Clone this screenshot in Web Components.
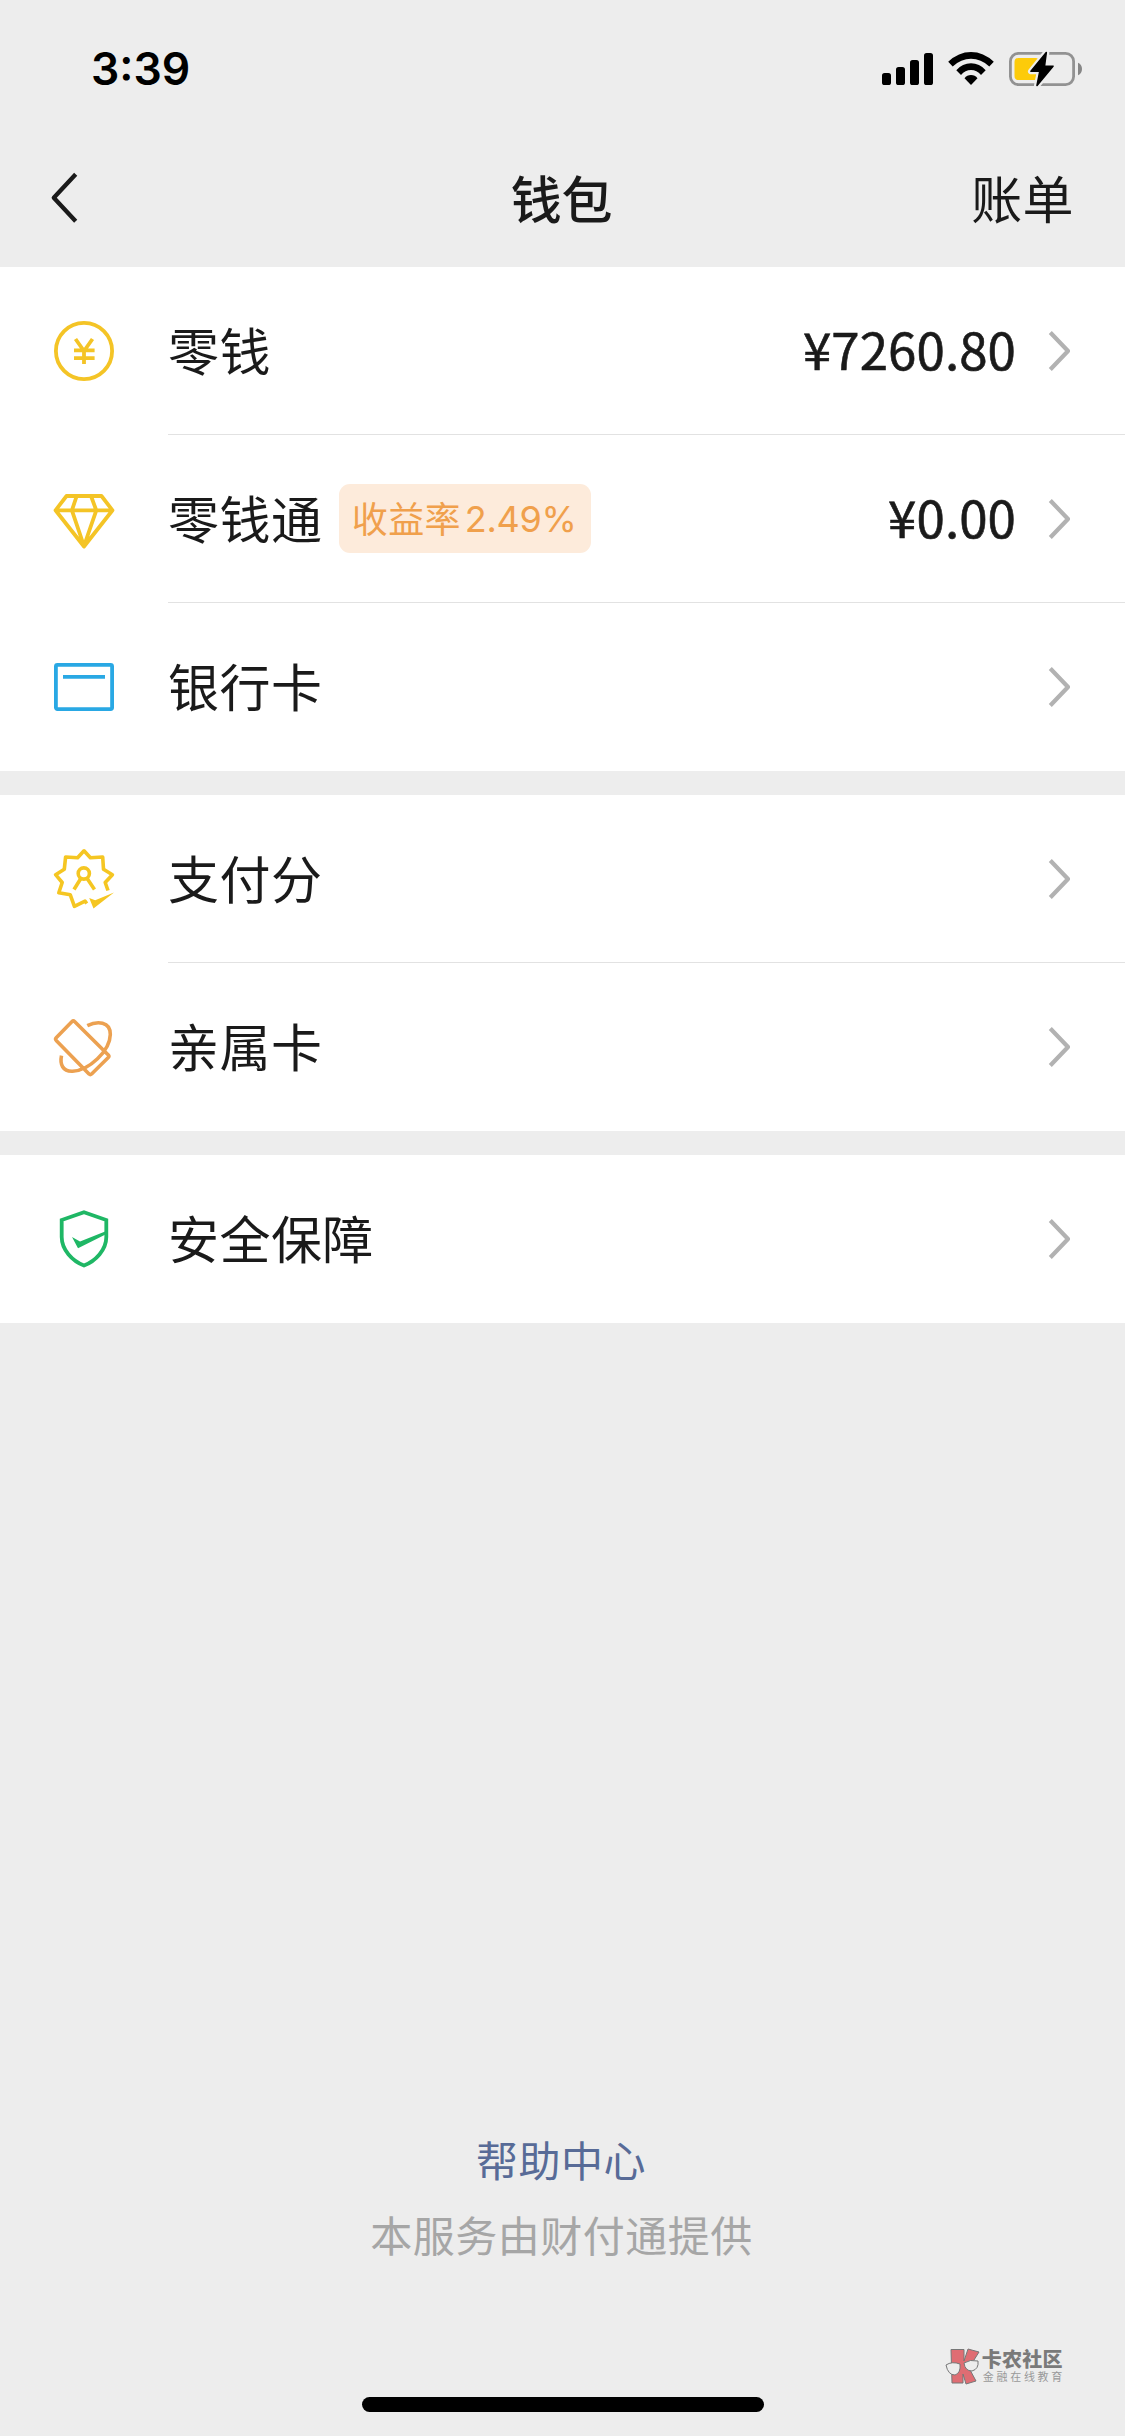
<!DOCTYPE html>
<html lang="zh-CN">
<head>
<meta charset="utf-8">
<title>钱包</title>
<style>
html,body{margin:0;padding:0;background:#ededed}
body{width:1125px;height:2436px;overflow:hidden;font-family:"Noto Sans CJK SC",sans-serif;color:#1a1a1a}
</style>
</head>
<body>
<wallet-page></wallet-page>
<script>
const define = (name, html) => customElements.define(name, class extends HTMLElement {
  constructor() {
    super();
    const t = document.createElement('template');
    t.innerHTML = html;
    this.attachShadow({ mode: 'open' }).appendChild(t.content.cloneNode(true));
  }
});

define('status-bar', `
<style>
:host{display:flex;height:132px;box-sizing:border-box;padding:6px 42px 0 91px;align-items:center;justify-content:space-between;color:#000}
.time{font:600 44.500px/54px Inter,sans-serif;letter-spacing:0}
.icons{display:flex;align-items:center}
svg{display:block}
</style>
<span class="time">3:39</span>
<div class="icons">
<svg width="203" height="38" viewBox="880 50 203 38">
  <rect x="882" y="73" width="9" height="12" rx="2.6"/><rect x="896" y="67" width="9" height="18" rx="2.6"/>
  <rect x="910" y="60" width="9" height="25" rx="2.6"/><rect x="924" y="53" width="9" height="32" rx="2.6"/>
  <path d="M948.2 61.8Q958.500 52 971 52T993.800 61.800L989.300 66.500Q981 58.800 971 58.800T952.700 66.500Z"/>
  <path d="M956.300 70.200Q962.500 63.300 971 63.300T985.700 70.200L981 75Q976.800 70 971 70T961 75Z"/>
  <path d="M964.500 78.300Q967 75 971 75T977.500 78.300L971 85Z"/>
  <rect x="1010.400" y="53.400" width="63.200" height="31.200" rx="8" fill="none" stroke="#929292" stroke-width="2.8"/>
  <rect x="1014.500" y="58" width="25" height="22" rx="4" fill="#fdcb0a"/>
  <path d="M1078 62.700Q1082 64.500 1082 69T1078 75.300Z" fill="#868686"/>
  <path d="M1046.300 52.500L1031 71.300H1039.800L1037 85.500L1053 66.200H1044.500Z" fill="#000" stroke="#ededed" stroke-width="6" stroke-linejoin="round"/>
  <path d="M1046.300 52.500L1031 71.300H1039.800L1037 85.500L1053 66.200H1044.500Z" stroke="#000" stroke-width="1.600" stroke-linejoin="round"/>
</svg></div>`);

define('nav-bar', `
<style>
:host{display:grid;grid-template-columns:1fr auto 1fr;align-items:center;height:135px;box-sizing:border-box;padding:0 51px 0 49px;font-size:51px;line-height:60px;letter-spacing:.4px}
svg{display:block;margin:0 0 3px 1px}
.t{font-weight:500;padding-bottom:5px;letter-spacing:-.2px}
.a{justify-self:end;padding-bottom:5px}
</style>
<svg width="30" height="54" viewBox="0 0 30 54"><path d="M25.700 3.200L3.800 26.700L25.700 50.200" fill="none" stroke="#1a1a1a" stroke-width="4.300" stroke-linejoin="round"/></svg>
<span class="t"><slot></slot></span><span class="a"><slot name="action"></slot></span>`);

define('wallet-group', `
<style>:host{display:flex;flex-direction:column;background:#fff;margin-bottom:24px}</style><slot></slot>`);

define('rate-badge', `
<style>
:host{display:flex;align-items:center;box-sizing:border-box;width:252px;height:69px;border-radius:11px;background:#fdebdb;color:#f0a04c;padding:0 0 0 13px;margin-left:16.500px}
.c{font-size:36px;line-height:42px;letter-spacing:.3px;padding-bottom:3px}
.n{font:400 36px/42px Inter,sans-serif;letter-spacing:-.3px;margin-left:4px}
</style>
<span class="c"><slot></slot></span><span class="n"><slot name="rate"></slot></span>`);

define('wallet-row', `
<style>
:host{display:flex;height:168px;padding-left:54px}
.icon{display:flex;align-items:center;width:114px;flex:none}
.body{display:flex;flex:1;align-items:center;box-sizing:border-box;padding-right:55px;border-bottom:1px solid #e2e2e2}
:host([last]) .body{border-bottom-color:transparent}
.label{font-size:51px;line-height:60px;letter-spacing:.45px;padding-bottom:4px}
.value{margin-left:auto;font-size:51px;line-height:60px;letter-spacing:.1px;-webkit-text-stroke:.6px #1a1a1a;padding-bottom:6px}
svg{display:block;margin-left:31px}
::slotted(wallet-icon){display:block}
</style>
<div class="icon"><slot name="icon"></slot></div>
<div class="body"><span class="label"><slot></slot></span><slot name="badge"></slot>
<span class="value"><slot name="value"></slot></span>
<svg width="23" height="42" viewBox="0 0 23 42"><path d="M3.300 2.500L21 21L3.300 39.500" fill="none" stroke="#b2b2b2" stroke-width="4.200" stroke-linejoin="round"/></svg></div>`);

const ICONS = {
  coin: ['#f4c426', '<circle cx="30" cy="30" r="28.100"/><path d="M21.500 18L30 30L38.500 18M30 29V43M20 29.400H40.600M20 37.200H40.600"/>'],
  gem: ['#f4c426', '<path d="M12.500 7H47.500L58.500 21.300L30 57.500L1.500 21.300ZM1.500 21.300H58.500M22.700 7L17.900 21.300L30 57L42.300 21.300L37 7"/>'],
  card: ['#29a8e4', '<rect x="1.900" y="7.900" width="56.200" height="44.200" rx="1.500"/><path d="M9 19.800H51"/>'],
  score: ['#f5c622', '<g stroke-width="3.600"><path d="M54 41.500L51.200 33.500L58.400 25.700L49.500 20.300L48.700 8L36.400 8.800L30 1.800L23.600 8.800L11.600 8L10.300 20.300L1.600 25.700L8.200 33.500L4.800 43.700L16.300 45.800L20.400 57.300L31 52.200L32.800 54.500"/><circle cx="29.800" cy="24.500" r="5.600"/><path d="M26.500 30L20 40.500M33.500 30L40.500 40.500"/></g><path d="M35.200 49L41.200 51.300L60 43.500L39.500 59.400Z" fill="#f5c622" stroke="none"/>'],
  family: ['#eca151', '<path stroke-width="3.600" d="M17.800 4.700L2.200 20.800Q1 22 2.200 23.400L35 57Q36.300 58.200 37.600 57L54.300 40.500Q55.500 39.300 54.300 38L20.800 4.700Q19.300 3.300 17.800 4.700ZM33.300 8.600C43 3.800 56.500 4 56.300 17.500C56 34 35 53.500 18.500 54.300C8.500 54.700 5.800 47 7.500 38.700"/>'],
  shield: ['#1fb765', '<path d="M30 3.300L52.300 11V28C52.300 41 41.500 52 30 56.500C18.500 52 7.700 41 7.700 28V11Z" stroke-linejoin="miter"/><path d="M18 28L26 32.500L53 21.700V24.800L24 39.200Z" fill="#1fb765" stroke="none"/>']
};
customElements.define('wallet-icon', class extends HTMLElement {
  connectedCallback() {
    const [color, shape] = ICONS[this.getAttribute('name')];
    this.attachShadow({ mode: 'open' }).innerHTML =
      `<style>:host{display:block}svg{display:block;overflow:visible}</style>
       <svg width="60" height="60" viewBox="0 0 60 60" fill="none" stroke="${color}" stroke-width="3.800" stroke-linejoin="round">${shape}</svg>`;
  }
});

define('page-footer', `
<style>
:host{display:flex;flex-direction:column;align-items:center;margin-top:auto;padding-right:2px;font-size:42px;line-height:60px;letter-spacing:.5px}
.help{color:#586b97;padding-right:1px}
.by{color:#a6a6a6;margin-top:15px}
</style>
<span class="help"><slot name="help"></slot></span><span class="by"><slot></slot></span>`);

define('brand-mark', `
<style>
:host{display:flex;align-items:center;align-self:flex-end;gap:2px;height:38px;margin:83px 60px 0 0;color:#7a7a7a;font-family:"Liberation Sans","Noto Sans CJK SC",sans-serif}
svg{display:block}
.txt{display:flex;flex-direction:column}
.a{font-size:20px;font-weight:900;line-height:22px;letter-spacing:.2px}
.b{font-size:11px;line-height:13px;letter-spacing:2.700px;color:#999;padding-left:1px}
</style>
<svg width="35" height="37" viewBox="0 0 35 37"><g fill="#df6d73" stroke="#777" stroke-width="1"><path d="M6 1.500H19V13L23 1L34 4L24 20L31 33L21 36L18 26V35H7Z"/></g>
<g fill="#ededed" stroke="#777" stroke-width="1"><path d="M1 17Q7 13 15 16Q16 25 10 27Q3 27 1 17Z"/><path d="M19 15Q25 11 33 13Q34 21 27 23Q20 23 19 15Z"/></g></svg>
<div class="txt"><span class="a"><slot></slot></span><span class="b"><slot name="sub"></slot></span></div>`);

define('home-indicator', `<style>:host{display:block;align-self:center;width:402px;height:15px;border-radius:7.500px;background:#000;margin:12px 0 24px}</style>`);

define('wallet-page', `
<style>:host{display:flex;flex-direction:column;width:1125px;height:2436px;background:#ededed}</style>
<status-bar></status-bar>
<nav-bar>钱包<span slot="action">账单</span></nav-bar>
<wallet-group>
  <wallet-row><wallet-icon slot="icon" name="coin"></wallet-icon>零钱<span slot="value">¥7260.80</span></wallet-row>
  <wallet-row><wallet-icon slot="icon" name="gem"></wallet-icon>零钱通<rate-badge slot="badge">收益率<span slot="rate">2.49%</span></rate-badge><span slot="value">¥0.00</span></wallet-row>
  <wallet-row last><wallet-icon slot="icon" name="card"></wallet-icon>银行卡</wallet-row>
</wallet-group>
<wallet-group>
  <wallet-row><wallet-icon slot="icon" name="score"></wallet-icon>支付分</wallet-row>
  <wallet-row last><wallet-icon slot="icon" name="family"></wallet-icon>亲属卡</wallet-row>
</wallet-group>
<wallet-group>
  <wallet-row last><wallet-icon slot="icon" name="shield"></wallet-icon>安全保障</wallet-row>
</wallet-group>
<page-footer><span slot="help">帮助中心</span>本服务由财付通提供</page-footer>
<brand-mark>卡农社区<span slot="sub">金融在线教育</span></brand-mark>
<home-indicator></home-indicator>`);
</script>
</body>
</html>
